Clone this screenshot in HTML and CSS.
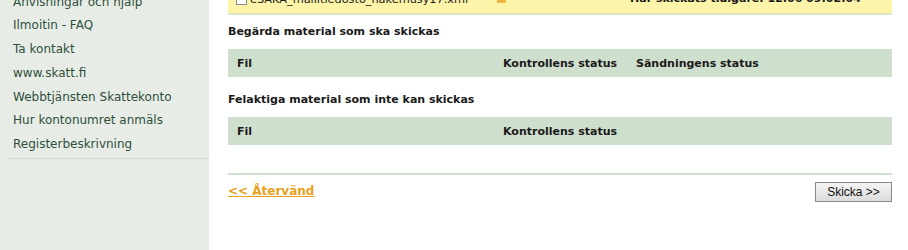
FILE: index.html
```html
<!DOCTYPE html>
<html lang="sv">
<head>
    <meta charset="UTF-8">
    <title>Ilmoitin - Skicka material</title>
    <link rel="stylesheet" href="styles.css">
</head>
<body>
<section class="page">
    <nav class="sidebar">
        <ul class="menu">
            <li class="cut"><a href="#">Anvisningar och hjälp</a></li>
            <li><a href="#">Ilmoitin - FAQ</a></li>
            <li><a href="#">Ta kontakt</a></li>
            <li><a href="#">www.skatt.fi</a></li>
            <li><a href="#">Webbtjänsten Skattekonto</a></li>
            <li><a href="#">Hur kontonumret anmäls</a></li>
            <li><a href="#">Registerbeskrivning</a></li>
        </ul>
    </nav>
    <main class="content">
        <div class="notice">
            <span class="file"><span class="box"></span>eSAKA_mallitiedosto_hakemusy17.xml</span>
            <span class="warn"></span>
            <span class="msg">Har skickats tidigare: 12.06 09:02:04</span>
        </div>
        <h3>Begärda material som ska skickas</h3>
        <div class="thead">
            <span class="c-fil">Fil</span>
            <span class="c-check">Kontrollens status</span>
            <span>Sändningens status</span>
        </div>
        <h3>Felaktiga material som inte kan skickas</h3>
        <div class="thead">
            <span class="c-fil">Fil</span>
            <span class="c-check">Kontrollens status</span>
        </div>
        <div class="actions">
            <a href="#" class="back">&lt;&lt; Återvänd</a>
            <button class="send">Skicka &gt;&gt;</button>
        </div>
    </main>
</section>
</body>
</html>
```

FILE: styles.css
```css
*{
    margin: 0;
    padding: 0;
    box-sizing: border-box;
}
body{
    background: #ffffff;
    font-family: "DejaVu Sans", Verdana, sans-serif;
    font-size: 12px;
    color: #1a1a1a;
}
.page{
    display: flex;
    height: 250px;
    overflow: hidden;
}
.sidebar{
    width: 209px;
    flex-shrink: 0;
    background: #e7ede6;
    padding-left: 8px;
}
.menu{
    list-style: none;
    border-bottom: 1px solid #d3dcd2;
    margin-top: -9.5px;
    padding-bottom: 1px;
}
.menu li{
    height: 23.8px;
    line-height: 23.8px;
    padding-left: 5px;
}
.menu a{
    color: #2f4d3b;
    text-decoration: none;
}
.content{
    width: 664px;
    margin-left: 19px;
}
.notice{
    display: flex;
    align-items: flex-start;
    height: 15px;
    background: #fbf4a9;
    border-bottom: 2px solid #dfe3c2;
    overflow: hidden;
    font-size: 11.3px;
    line-height: 13px;
    white-space: nowrap;
}
.notice .file{
    display: flex;
    align-items: center;
    width: 269px;
    padding-left: 8px;
    margin-top: -7px;
}
.box{
    display: inline-block;
    width: 11px;
    height: 10px;
    border: 1px solid #888;
    background: #fff;
    margin-right: 3px;
}
.warn{
    width: 9px;
    height: 3px;
    background: #f0b640;
}
.msg{
    margin-left: 124px;
    margin-top: -8.5px;
    font-weight: bold;
    font-size: 11px;
}
h3{
    font-size: 11px;
    font-weight: bold;
    margin: 10px 0 10px;
    line-height: 14px;
}
.thead{
    display: flex;
    height: 28px;
    align-items: center;
    background: #cfdfcd;
    padding-left: 9px;
    font-weight: bold;
    font-size: 11px;
    margin-bottom: 16px;
}
.c-fil{
    width: 266px;
}
.c-check{
    width: 133px;
}
.actions{
    display: flex;
    justify-content: space-between;
    align-items: center;
    border-top: 2px solid #d3dfd3;
    margin-top: 28px;
    padding-top: 7px;
}
.back{
    color: #e8a020;
    font-weight: bold;
    font-size: 12px;
    margin-bottom: 3px;
}
.send{
    font-family: "Liberation Sans", Arial, sans-serif;
    font-size: 12px;
    width: 77px;
    height: 20px;
    color: #111;
    background: linear-gradient(180deg, #f4f4f4 0%, #dcdcdc 100%);
    border: 1px solid #8a8a8a;
    cursor: pointer;
}
```
